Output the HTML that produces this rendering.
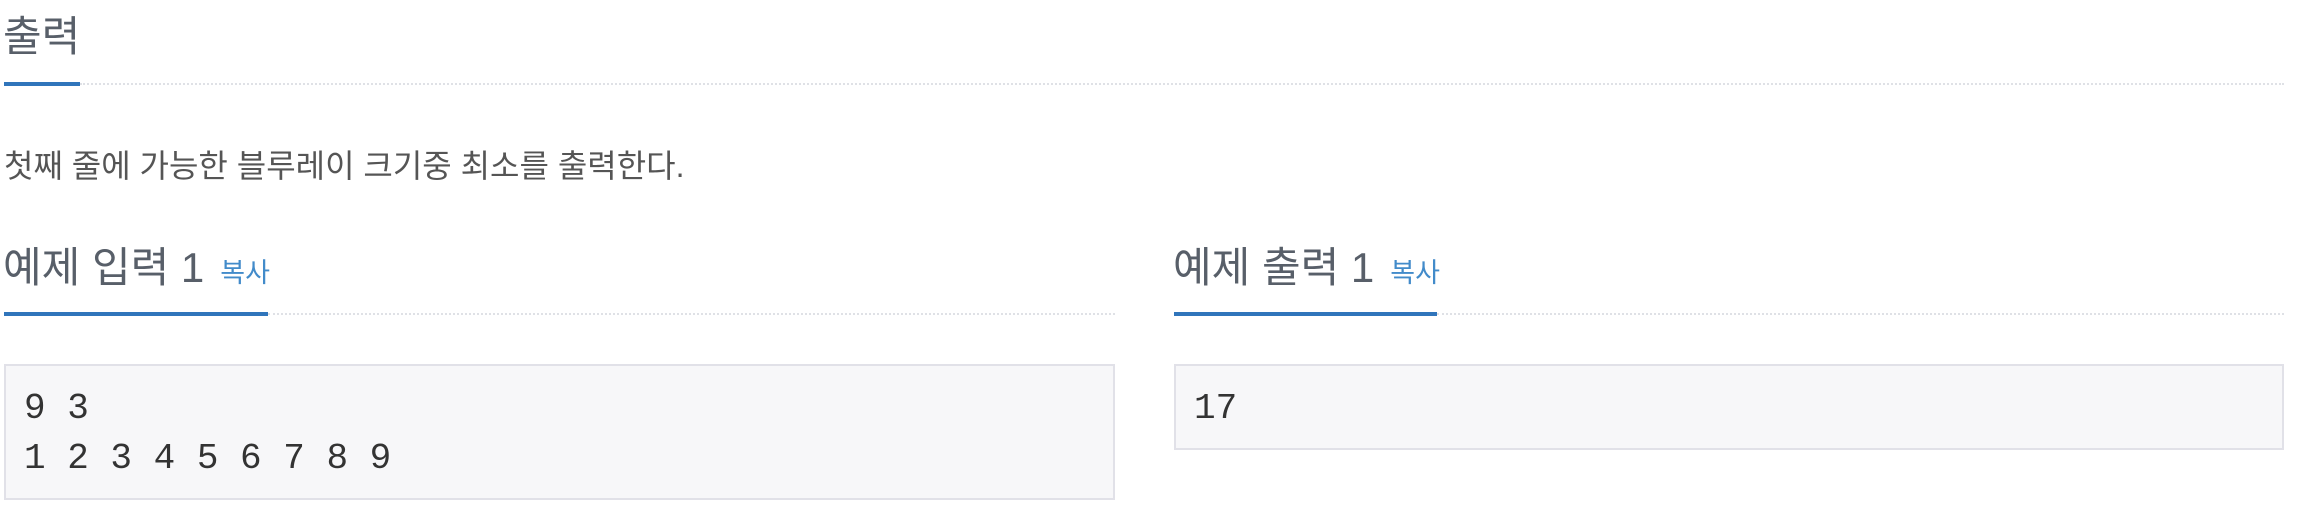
<!DOCTYPE html>
<html><head><meta charset="utf-8"><style>
*{margin:0;padding:0;box-sizing:border-box}
body{width:2300px;height:520px;background:#fff;position:relative;overflow:hidden;font-family:"Liberation Sans","Noto Sans CJK KR",sans-serif}
.h{position:absolute;font-size:42px;color:#585f69;line-height:1;white-space:nowrap}
.c{font-size:27px;color:#428bca;margin-left:16px}
.dot{position:absolute;height:0;border-top:2px dotted #dfe1e6}
.bl{position:absolute;height:4px;background:#3075bb}
.p{position:absolute;left:4px;top:150px;font-size:32px;color:#555;line-height:1;white-space:nowrap}
pre{position:absolute;top:364px;background:#f7f7f9;border:2px solid #e1e1e8;font-family:"Liberation Mono",monospace;font-size:36px;line-height:50px;color:#333;padding:18px 0 0 18px}
</style></head><body>
<div class="h" style="left:3px;top:16px">출력</div>
<div class="dot" style="left:80px;top:83px;width:2204px"></div>
<div class="bl" style="left:4px;top:82px;width:76px"></div>
<div class="p">첫째 줄에 가능한 블루레이 크기중 최소를 출력한다.</div>

<div class="h" style="left:3px;top:247px">예제 입력 1<span class="c">복사</span></div>
<div class="dot" style="left:268px;top:313px;width:847px"></div>
<div class="bl" style="left:4px;top:312px;width:264px"></div>
<pre style="left:4px;width:1111px;height:136px">9 3
1 2 3 4 5 6 7 8 9</pre>

<div class="h" style="left:1173px;top:247px">예제 출력 1<span class="c">복사</span></div>
<div class="dot" style="left:1437px;top:313px;width:847px"></div>
<div class="bl" style="left:1174px;top:312px;width:263px"></div>
<pre style="left:1174px;width:1110px;height:86px">17</pre>
</body></html>
